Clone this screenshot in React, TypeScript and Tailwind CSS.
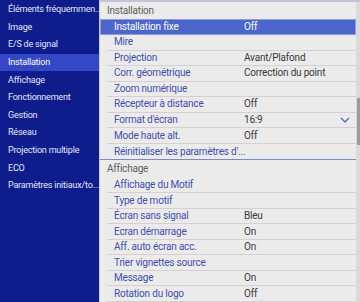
const sideItems = [
  "Éléments fréquemmen...",
  "Image",
  "E/S de signal",
  "Installation",
  "Affichage",
  "Fonctionnement",
  "Gestion",
  "Réseau",
  "Projection multiple",
  "ECO",
  "Paramètres initiaux/to...",
];

const installRows = [
  { label: "Installation fixe", value: "Off", active: true },
  { label: "Mire", value: "" },
  { label: "Projection", value: "Avant/Plafond" },
  { label: "Corr. géométrique", value: "Correction du point" },
  { label: "Zoom numérique", value: "" },
  { label: "Récepteur à distance", value: "Off" },
  { label: "Format d'écran", value: "16:9", chevron: true },
  { label: "Mode haute alt.", value: "Off" },
  { label: "Réinitialiser les paramètres d'...", value: "", last: true },
];

const displayRows = [
  { label: "Affichage du Motif", value: "" },
  { label: "Type de motif", value: "" },
  { label: "Écran sans signal", value: "Bleu" },
  { label: "Ecran démarrage", value: "On" },
  { label: "Aff. auto écran acc.", value: "On" },
  { label: "Trier vignettes source", value: "" },
  { label: "Message", value: "On" },
  { label: "Rotation du logo", value: "Off" },
];

type Row = { label: string; value: string; active?: boolean; chevron?: boolean; last?: boolean };

const MenuRow: React.FC<{ row: Row }> = ({ row }) => {
  if (row.active) {
    return (
      <div className="flex h-4 items-center bg-[#4c66cc] border border-[#8a9be0] text-white">
        <span className="w-[143px] pl-[13px] whitespace-nowrap">{row.label}</span>
        <span className="flex-1">{row.value}</span>
      </div>
    );
  }
  return (
    <div className="flex h-4 items-center pl-[7px]">
      <div
        className={`flex h-full flex-1 items-center ${row.last ? "" : "border-b border-[#d2d2d4]"}`}
      >
        <span className="w-[137px] pl-[7px] text-[#3d4fb4] whitespace-nowrap">{row.label}</span>
        <span className="flex-1 text-[#3a3a3a]">{row.value}</span>
        {row.chevron && (
          <svg width="10" height="6" viewBox="0 0 10 6" className="mr-[6px]">
            <path d="M1 1 L5 5 L9 1" fill="none" stroke="#4a5ab8" strokeWidth="1.2" />
          </svg>
        )}
      </div>
    </div>
  );
};

export default function App() {
  return (
    <div
      className="flex h-[302px] w-[360px] overflow-hidden leading-none"
      style={{ fontFamily: 'Roboto, "Open Sans", sans-serif' }}
    >
      {/* Sidebar */}
      <div className="w-[100px] h-full shrink-0 bg-[#0f1c8c] pt-px pb-[2px] border-r border-[#c8cad8] text-[9px] tracking-[-0.2px]">
        {sideItems.map((item) => (
          <div
            key={item}
            className={`flex h-[17.6px] items-center pl-[8px] whitespace-nowrap ${
              item === "Installation" ? "bg-[#3448c6] text-white" : "text-[#e2e6ff]"
            }`}
          >
            {item}
          </div>
        ))}
      </div>

      {/* Content */}
      <div className="flex flex-1 h-full bg-[#ebebeb] border-t-2 border-[#c3c5d6] text-[10px] tracking-[-0.2px]">
        <div className="flex-1 flex flex-col">
          <div className="flex h-[18px] items-center pl-[7px] text-[#5e5e5e]">Installation</div>
          {installRows.map((r) => (
            <MenuRow key={r.label} row={r} />
          ))}
          <div className="h-px bg-[#7d88c9]" />
          <div className="flex h-[18px] items-center pl-[7px] text-[#5e5e5e]">Affichage</div>
          {displayRows.map((r) => (
            <MenuRow key={r.label} row={r} />
          ))}
        </div>
        {/* Scrollbar */}
        <div className="w-[4px] h-full bg-[#dadada] pt-[96px]">
          <div className="h-[47px] w-[3px] ml-px bg-[#9c9c9c]" />
        </div>
      </div>
    </div>
  );
}
